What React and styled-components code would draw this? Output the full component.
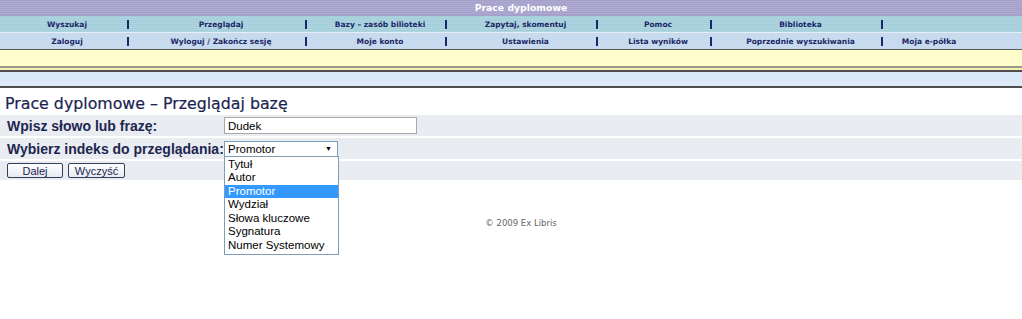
import React from 'react';
import styled, { createGlobalStyle } from 'styled-components';

const GlobalStyle = createGlobalStyle`
  body {
    margin: 0;
    background: #fff;
    font-family: "DejaVu Sans", Verdana, sans-serif;
  }
`;

const Page = styled.div`
  width: 1022px;
  height: 319px;
  overflow: hidden;
`;

const TitleBar = styled.div`
  height: 15px;
  background: repeating-linear-gradient(#a5a1cb 0 1px, #aeaad2 1px 2px);
  color: #fff;
  font-weight: bold;
  font-size: 9.3px;
  line-height: 15px;
  text-align: center;
  padding-left: 20px;
`;

const NavRow = styled.div`
  display: grid;
  grid-template-columns: 126px 4px 174px 4px 136px 4px 147px 4px 110px 4px 167px 4px 82px 1fr;
  height: 16px;
  align-items: center;
  background: ${(p) => p.$bg};
  border-top: 1px solid ${(p) => p.$line};
  color: #1b2766;
  font-weight: bold;
  font-size: 7.5px;
`;

const NavCell = styled.div`
  text-align: center;
  padding-left: 8px;
  white-space: nowrap;
`;

const NavSep = styled.div`
  justify-self: center;
  width: 2px;
  height: 9px;
  background: #1b2766;
`;

const Band = styled.div`
  height: ${(p) => p.$h}px;
  background: ${(p) => p.$bg};
  border-top: ${(p) => p.$t || 0}px solid #5a5a5a;
  border-bottom: ${(p) => p.$b || 0}px solid ${(p) => p.$line || '#555'};
`;

const Heading = styled.h1`
  margin: 6px 0 0 5px;
  font-size: 15.8px;
  font-weight: normal;
  color: #1a2450;
  line-height: 20px;
  -webkit-text-stroke: 0.2px #1a2450;
`;

const FormTable = styled.div`
  display: flex;
  flex-direction: column;
  gap: 2px;
  margin-top: 1px;
`;

const FormRow = styled.div`
  display: grid;
  grid-template-columns: 224px 1fr;
  align-items: center;
  height: ${(p) => p.$h}px;
  background: #e9ecf1;
`;

const Label = styled.div`
  padding-left: 7px;
  white-space: nowrap;
  font-family: "Liberation Sans", Arial, sans-serif;
  font-weight: bold;
  font-size: 14px;
  color: #1d2650;
`;

const TextInput = styled.input`
  box-sizing: border-box;
  width: 193px;
  height: 17px;
  border: 1px solid #a9a9a9;
  padding: 0 3px;
  font-family: "Liberation Sans", Arial, sans-serif;
  font-size: 11.5px;
  color: #000;
  background: #fff;
  outline: none;
`;

const SelectWrap = styled.div`
  position: relative;
  width: 114px;
`;

const SelectBox = styled.div`
  box-sizing: border-box;
  display: flex;
  justify-content: space-between;
  align-items: center;
  width: 114px;
  height: 16px;
  border: 1px solid #7f9db9;
  background: #fff;
  padding: 0 5px 0 3px;
  font-family: "Liberation Sans", Arial, sans-serif;
  font-size: 11.5px;
`;

const Arrow = styled.span`
  font-size: 7px;
`;

const OptionList = styled.ul`
  position: absolute;
  top: 15px;
  left: 0;
  box-sizing: border-box;
  width: 115px;
  margin: 0;
  padding: 1px 0;
  list-style: none;
  border: 1px solid #7f9db9;
  background: #fff;
  font-family: "Liberation Sans", Arial, sans-serif;
  font-size: 11.5px;
  z-index: 2;
`;

const Option = styled.li`
  height: 13.6px;
  line-height: 13.6px;
  padding-left: 3px;
  color: ${(p) => (p.$active ? '#fff' : '#000')};
  background: ${(p) => (p.$active ? '#3399ff' : 'transparent')};
`;

const Buttons = styled.div`
  display: flex;
  gap: 5px;
  padding-left: 7px;
`;

const Button = styled.button`
  box-sizing: border-box;
  width: ${(p) => p.$w}px;
  height: 15px;
  padding: 0;
  border: 1px solid #30405a;
  border-radius: 2px;
  background: linear-gradient(#ffffff, #e6ebf2);
  font-family: "Liberation Sans", Arial, sans-serif;
  font-size: 11px;
  color: #1d2650;
  line-height: 12px;
`;

const Footer = styled.div`
  margin-top: 38px;
  text-align: center;
  padding-left: 20px;
  font-size: 8.5px;
  color: #666;
`;

const topNav = ['Wyszukaj', 'Przeglądaj', 'Bazy – zasób bilioteki', 'Zapytaj, skomentuj', 'Pomoc', 'Biblioteka', ''];
const subNav = ['Zaloguj', 'Wyloguj / Zakończ sesję', 'Moje konto', 'Ustawienia', 'Lista wyników', 'Poprzednie wyszukiwania', 'Moja e-półka'];
const indexes = ['Tytuł', 'Autor', 'Promotor', 'Wydział', 'Słowa kluczowe', 'Sygnatura', 'Numer Systemowy'];

const Nav = ({ items, bg, line }) => (
  <NavRow $bg={bg} $line={line}>
    {items.map((item, i) => (
      <React.Fragment key={i}>
        <NavCell>{item}</NavCell>
        {i < items.length - 1 && <NavSep />}
      </React.Fragment>
    ))}
  </NavRow>
);

const App = () => {
  return (
    <Page>
      <GlobalStyle />
      <TitleBar>Prace dyplomowe</TitleBar>
      <Nav items={topNav} bg="repeating-linear-gradient(#a5cedb 0 1px, #aed4e0 1px 2px)" line="#a5a1cb" />
      <Nav items={subNav} bg="#c8dbee" line="#e6eef7" />
      <Band $h={16} $bg="#fffdcb" $t={1} $b={2} $line="#9a9a88" />
      <Band $h={2} $bg="#f4f0b2" $b={2} $line="#4e4e4e" />
      <Band $h={14} $bg="#dce9f8" $b={2} $line="#4e4e4e" />
      <Heading>Prace dyplomowe – Przeglądaj bazę</Heading>
      <FormTable>
        <FormRow $h={21}>
          <Label>Wpisz słowo lub frazę:</Label>
          <TextInput defaultValue="Dudek" readOnly />
        </FormRow>
        <FormRow $h={21}>
          <Label>Wybierz indeks do przeglądania:</Label>
          <SelectWrap>
            <SelectBox>
              <span>Promotor</span>
              <Arrow>▼</Arrow>
            </SelectBox>
            <OptionList>
              {indexes.map((name) => (
                <Option key={name} $active={name === 'Promotor'}>{name}</Option>
              ))}
            </OptionList>
          </SelectWrap>
        </FormRow>
        <FormRow $h={19}>
          <Buttons>
            <Button $w={56}>Dalej</Button>
            <Button $w={57}>Wyczyść</Button>
          </Buttons>
        </FormRow>
      </FormTable>
      <Footer>© 2009 Ex Libris</Footer>
    </Page>
  );
};

export default App;
